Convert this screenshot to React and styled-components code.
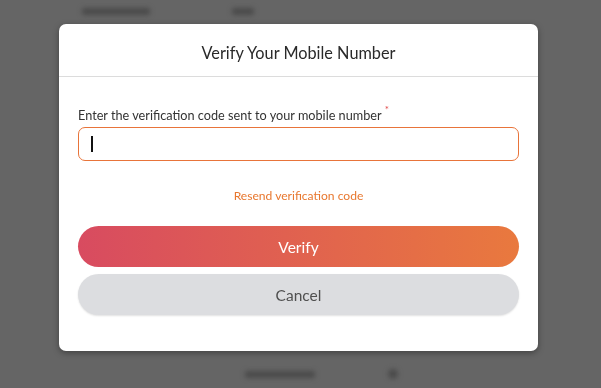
import React from "react";
import styled, { createGlobalStyle } from "styled-components";

const Global = createGlobalStyle`
  html, body { margin: 0; padding: 0; }
  body {
    width: 601px; height: 388px; overflow: hidden;
    background: #656565;
    font-family: "Lato", "Open Sans", sans-serif;
  }
`;

const Page = styled.div`
  width: 601px;
  height: 388px;
  display: flex;
  flex-direction: column;
  justify-content: space-between;
  filter: blur(2.5px);
`;

const PageRow = styled.div`
  display: grid;
  grid-template-columns: ${(p) => p.$cols};
  align-items: center;
  height: ${(p) => p.$h}px;
`;

const Blob = styled.div`
  width: ${(p) => p.$w}px;
  height: ${(p) => p.$hh || 7}px;
  border-radius: ${(p) => (p.$round ? "50%" : "2px")};
  background: #4a4a4a;
`;

const Overlay = styled.div`
  position: fixed;
  inset: 0;
  display: flex;
  justify-content: flex-start;
  padding: 24px 0 0 59px;
  box-sizing: border-box;
`;

const Modal = styled.div`
  width: 479px;
  height: 327px;
  background: #fff;
  border-radius: 7px;
  box-shadow: 0 2px 6px rgba(0, 0, 0, 0.35);
  display: flex;
  flex-direction: column;
  overflow: hidden;
`;

const Header = styled.div`
  height: 53px;
  border-bottom: 1px solid #dcdcdc;
  display: flex;
  align-items: center;
  justify-content: center;
  font-size: 16.3px;
  color: #2a2a2a;
  box-sizing: border-box;
  padding-top: 4px;
`;

const Body = styled.div`
  padding: 30px 19px 0 19px;
  display: flex;
  flex-direction: column;
`;

const Label = styled.label`
  font-size: 12.7px;
  color: #333;
  margin-bottom: 4px;
  display: flex;
  align-items: flex-start;
  gap: 3px;
`;

const Required = styled.span`
  color: #e04848;
  font-size: 10px;
  line-height: 1;
  margin-top: -3px;
`;

const Input = styled.div`
  height: 34px;
  border: 1px solid #e8743a;
  border-radius: 7px;
  box-sizing: border-box;
  display: flex;
  align-items: center;
  padding-left: 12px;
`;

const Caret = styled.div`
  width: 1.5px;
  height: 16px;
  background: #111;
`;

const Resend = styled.div`
  margin-top: 27px;
  text-align: center;
  font-size: 12.1px;
  color: #e8772e;
`;

const Button = styled.div`
  height: 41px;
  border-radius: 21px;
  display: flex;
  align-items: center;
  justify-content: center;
  font-size: 15.5px;
  margin-top: ${(p) => p.$mt}px;
  color: ${(p) => (p.$primary ? "#fff" : "#505050")};
  background: ${(p) =>
    p.$primary ? "linear-gradient(90deg, #d84b60 0%, #e9793e 100%)" : "#dcdde0"};
  box-shadow: ${(p) => (p.$primary ? "none" : "0 1px 2px rgba(0,0,0,0.12)")};
`;

export default function App() {
  return (
    <>
      <Global />
      <Page>
        <PageRow $cols="82px 150px 70px" $h={22}>
          <span />
          <Blob $w={68} />
          <Blob $w={22} />
        </PageRow>
        <PageRow $cols="245px 143px 20px" $h={28}>
          <span />
          <Blob $w={70} />
          <Blob $w={10} $hh={10} $round />
        </PageRow>
      </Page>
      <Overlay>
        <Modal>
          <Header>Verify Your Mobile Number</Header>
          <Body>
            <Label>
              Enter the verification code sent to your mobile number
              <Required>*</Required>
            </Label>
            <Input>
              <Caret />
            </Input>
            <Resend>Resend verification code</Resend>
            <Button $primary $mt={23}>Verify</Button>
            <Button $mt={7}>Cancel</Button>
          </Body>
        </Modal>
      </Overlay>
    </>
  );
}
